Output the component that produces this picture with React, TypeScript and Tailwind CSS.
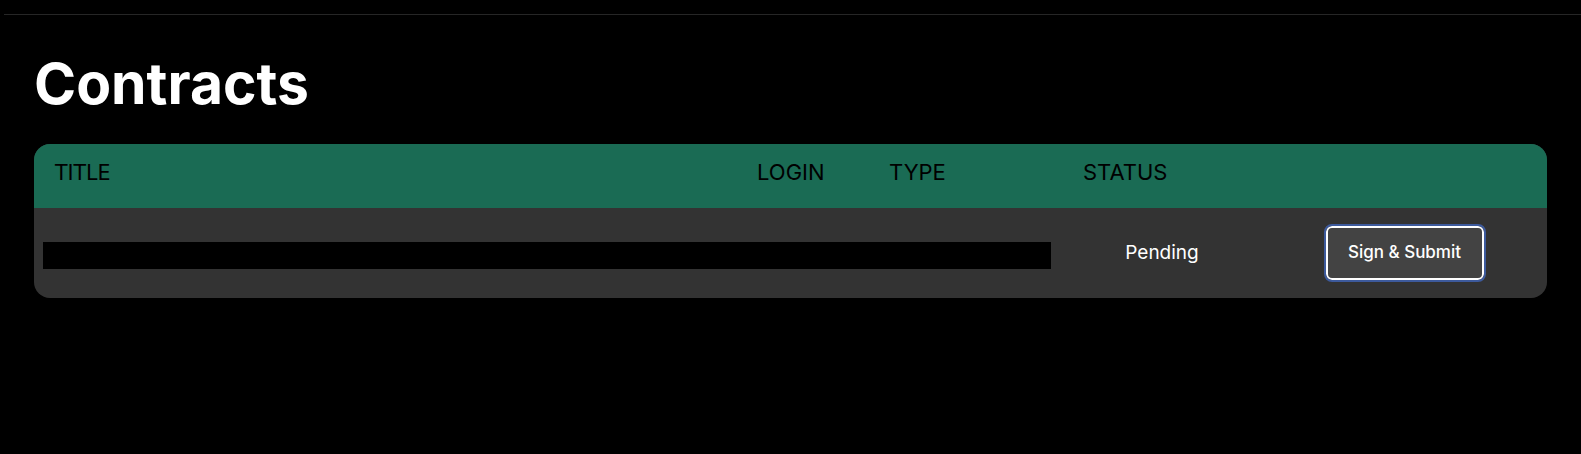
import React from "react";

export default function App() {
  const sans = { fontFamily: "Inter, 'Noto Sans', sans-serif" } as React.CSSProperties;
  return (
    <div className="min-h-[454px] w-full bg-black text-white font-[Inter,'Noto_Sans',sans-serif]">
      <div className="h-[14px]" />
      <div className="ml-[4px] h-px bg-[#262626]" />
      <div className="px-[34px]">
        <h1 className="mt-[41px] text-[57px] font-bold leading-[56px] tracking-[0px] text-white">
          Contracts
        </h1>
        <div className="mt-[32px] overflow-hidden rounded-2xl bg-[#333333]">
          <div className="grid h-[64px] grid-cols-[701px_133px_194px_200px_1fr] bg-[#1a6b54] pt-[14px] text-[22px] leading-[28px] text-black">
            <div className="pl-[21px] pt-[1px] font-['DejaVu_Sans',sans-serif] text-[20.5px]">TITLE</div>
            <div className="pl-[22px]">LOGIN</div>
            <div className="pl-[21px]">TYPE</div>
            <div className="pl-[21px]">STATUS</div>
            <div />
          </div>
          <div className="grid h-[90px] grid-cols-[701px_133px_194px_200px_1fr] items-center">
            <div className="col-span-3 pl-[9px]">
              <div className="mt-[5px] h-[27px] w-[1008px] bg-black" />
            </div>
            <div className="text-center text-[19px] leading-[24px] text-white">Pending</div>
            <div className="flex justify-center">
              <button
                className="h-[54px] w-[158px] rounded-[6px] border-2 border-white bg-[#434343] text-[17px] font-medium text-white outline-2 outline-offset-0 outline-[#3d5a9c]"
                style={sans}
              >
                Sign &amp; Submit
              </button>
            </div>
          </div>
        </div>
      </div>
    </div>
  );
}
